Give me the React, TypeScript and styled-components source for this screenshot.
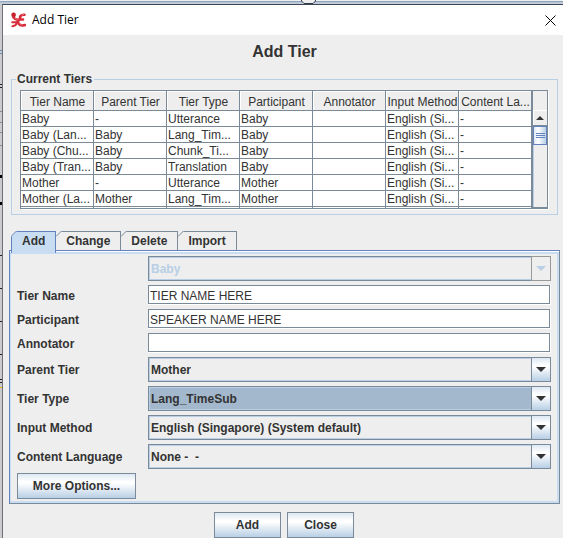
import React from "react";
import styled, { createGlobalStyle, css } from "styled-components";

const ink = "#333333";
const steel = "#7a8a99";
const sky = "#b8cfe5";
const paleBlue = "#c8ddf2";
const face = "#eeeeee";
const blue = "#6382bf";
const metal = "linear-gradient(#dde8f3 0%, #ffffff 32%, #ffffff 38%, #b8cfe5 100%)";

const Global = createGlobalStyle`
  * { box-sizing: border-box; }
  body {
    margin: 0;
    background: #cbcbcd;
    color: ${ink};
    font: 12px/16px "Liberation Sans", Arial, sans-serif;
    overflow: hidden;
  }
  button, input, select { font: inherit; color: inherit; margin: 0; border-radius: 0; }
`;

const Desktop = styled.div`
  display: grid;
  grid-template-columns: 2px minmax(0, 1fr);
  grid-template-rows: 4px minmax(534px, auto);
  min-height: 100vh;
`;

const SliderTrack = styled.div`
  grid-column: 1 / -1;
  display: flex;
  justify-content: center;
  padding-left: 54px;
  background: linear-gradient(#eeeeee 0 1px, #8fa6c0 1px 2px, #b5c5d8 2px 3px, #c8ccd2 3px);
`;

const Backdrop = styled.svg`
  display: block;
  width: 2px;
  height: 534px;
`;

const Dialog = styled.main`
  background: ${face};
  border-top: 1px solid #3b4658;
  border-left: 1px solid #6d7177;
`;

const TitleBar = styled.header`
  display: flex;
  align-items: center;
  height: 30px;
  padding: 0 7px 0 8px;
  background: #ffffff;
  color: #000000;
  font-family: "Open Sans", "Noto Sans", sans-serif;
`;

const TitleText = styled.span`
  flex: 1;
  padding-left: 6px;
`;

const CloseButton = styled.button`
  display: grid;
  padding: 0;
  border: 0;
  background: none;
`;

const Content = styled.div`
  display: flex;
  flex-direction: column;
  padding: 7px 3px 0 6px;
`;

const Heading = styled.h1`
  margin: 0;
  text-align: center;
  font-size: 16px;
  line-height: 20px;
`;

const Group = styled.fieldset`
  min-width: 0;
  margin: 9px 2px 0;
  padding: 3px 9px 5px 8px;
  border: 1px solid ${sky};
`;

const GroupTitle = styled.legend`
  margin-left: -4px;
  padding: 0 2px 0 1px;
  font-weight: bold;
`;

const ScrollPane = styled.div`
  display: grid;
  grid-template-columns: minmax(0, 1fr) 15px;
  height: 119px;
  overflow: hidden;
  border: 1px solid ${steel};
  box-shadow: 1px 1px 0 #ffffff;
`;

const TierTable = styled.table`
  width: 100%;
  table-layout: fixed;
  border-collapse: separate;
  border-spacing: 0;
  background: #ffffff;
`;

const cell = css`
  overflow: hidden;
  white-space: nowrap;
  font-weight: normal;
  line-height: 13px;
  border-right: 1px solid ${steel};
  border-bottom: 1px solid ${steel};
`;

const HeadCell = styled.th`
  ${cell}
  height: 20px;
  padding: 4px 0 0 1px;
  background: ${face};
  box-shadow: inset 1px 1px 0 #ffffff;
`;

const Cell = styled.td`
  ${cell}
  height: 16px;
  padding: 2px 0 0 1px;
`;

const Rail = styled.div`
  display: flex;
  flex-direction: column;
  padding-top: 19px;
  border-left: 1px solid ${steel};
`;

const RailButton = styled.button`
  display: grid;
  place-items: center;
  height: 16px;
  padding: 0;
  border: 1px solid ${steel};
  border-width: 0 0 1px;
  background: ${face};
  box-shadow: inset 1px 1px 0 #ffffff;
  &:last-child { border-width: 1px 0 0; }
`;

const Thumb = styled.div`
  display: grid;
  place-items: center;
  height: 19px;
  border: 1px solid ${blue};
  background: linear-gradient(90deg, #dde8f3, #ffffff 35%, #b8cfe5);
`;

const Track = styled.div`
  flex: 1;
  border-left: 1px solid ${sky};
`;

const Tabs = styled.div`
  display: flex;
  margin: 16px 2px 0;
`;

const Tab = styled.button<{ $active?: boolean }>`
  position: relative;
  height: 19px;
  padding: 0 10px;
  border: 1px solid ${steel};
  border-width: 1px 1px 0 0;
  background: ${face};
  font-weight: bold;
  line-height: 16px;
  ${(p) =>
    p.$active &&
    css`
      z-index: 1;
      height: 22px;
      margin-bottom: -3px;
      padding-bottom: 3px;
      border-color: ${blue};
      border-left-width: 1px;
      background: ${paleBlue};
    `}
`;

const Corner = styled.svg<{ $active?: boolean }>`
  position: absolute;
  top: -1px;
  left: ${(p) => (p.$active ? "-1px" : "0")};
`;

const Panel = styled.section`
  padding: 2px 6px 2px 5px;
  border: 1px solid ${steel};
  border-top-color: ${blue};
  border-left-color: ${blue};
  box-shadow: inset 0 1px 0 #ffffff, inset 1px 3px 0 ${paleBlue}, inset -2px -2px 0 ${paleBlue};
`;

const Fields = styled.div`
  display: grid;
  grid-template-columns: 127px minmax(0, 1fr);
  align-items: center;
  gap: 4px;
  padding: 3px 2px 4px;
`;

const Label = styled.label<{ $text?: boolean }>`
  padding-top: ${(p) => (p.$text ? "2px" : "0")};
  font-weight: bold;
`;

const TextInput = styled.input`
  width: 100%;
  height: 20px;
  padding: 2px 1px 0;
  border: 1px solid ${steel};
  border-bottom-width: 1px;
  background: #ffffff;
  outline: 0;
`;

const InputFrame = styled.div`
  display: grid;
  height: 20px;
  padding: 0 1px 1px 0;
  background: #ffffff;

  ${TextInput} { height: 19px; }
`;

const Combo = styled.div`
  display: grid;
  grid-template-columns: minmax(0, 1fr) 20px;
  height: 25px;
`;

const Select = styled.select<{ $focused?: boolean }>`
  grid-area: 1 / 1 / 2 / 3;
  appearance: none;
  width: 100%;
  padding: 0 22px 0 2px;
  border: 1px solid ${steel};
  background: ${(p) => (p.$focused ? "#a3b8cc" : face)};
  box-shadow: inset 0 0 0 1px ${sky};
  font-weight: bold;
  outline: 0;
  &:disabled { color: ${sky}; opacity: 1; }
`;

const ArrowBox = styled.span<{ $off?: boolean }>`
  grid-area: 1 / 2;
  z-index: 1;
  display: grid;
  place-items: center;
  pointer-events: none;
  color: ${(p) => (p.$off ? sky : ink)};
  border: 1px solid ${(p) => (p.$off ? "#999999" : steel)};
  background: ${(p) => (p.$off ? face : metal)};
`;

const Button = styled.button<{ $wide?: boolean }>`
  width: ${(p) => (p.$wide ? "119px" : "67px")};
  height: 26px;
  padding: 0;
  border: 1px solid ${steel};
  background: ${metal};
  font-weight: bold;
`;

const PanelActions = styled.div`
  display: flex;
  padding: 0 2px 2px;
`;

const Footer = styled.footer`
  display: flex;
  justify-content: center;
  gap: 6px;
  padding: 8px 1px 0 0;
`;

const headers = ["Tier Name", "Parent Tier", "Tier Type", "Participant", "Annotator", "Input Method", "Content La..."];

const tiers = [
  ["Baby", "-", "Utterance", "Baby"],
  ["Baby (Lan...", "Baby", "Lang_Tim...", "Baby"],
  ["Baby (Chu...", "Baby", "Chunk_Ti...", "Baby"],
  ["Baby (Tran...", "Baby", "Translation", "Baby"],
  ["Mother", "-", "Utterance", "Mother"],
  ["Mother (La...", "Mother", "Lang_Tim...", "Mother"],
  ["", "", "", ""],
];

function Triangle({ up, small }: { up?: boolean; small?: boolean }) {
  const w = small ? 8 : 10;
  const h = small ? 4 : 5;
  return (
    <svg width={w} height={h} aria-hidden="true">
      <path d={up ? `M0 ${h}L${w / 2} 0L${w} ${h}Z` : `M0 0H${w}L${w / 2} ${h}Z`} fill="currentColor" />
    </svg>
  );
}

function Logo() {
  return (
    <svg width="15" height="16" viewBox="0 0 15 16" aria-hidden="true">
      <circle cx="2.6" cy="2.9" r="2.3" fill="#c4202c" />
      <path d="M2.5 5.500Q5 8.500 8 7.500Q9.500 6.500 9.200 4.500Q10 2.600 13.500 2.800" fill="none" stroke="#d42a38" strokeWidth="2.600" strokeLinecap="round" />
      <path d="M8 7.500H12M8 7.500Q6.500 9 7.500 11.500Q9.500 14.500 14 13" fill="none" stroke="#d92e3c" strokeWidth="2.600" strokeLinecap="round" />
      <path d="M1.200 10.300H5Q6.500 10 7.500 8.500M5.800 11Q5 13.800 1.500 14.300" fill="none" stroke="#d92e3c" strokeWidth="2" strokeLinecap="round" />
      <path d="M4 6.400Q6 7.800 8 6.800M10.500 3L13 2.500M8.500 11.500L11 13" fill="none" stroke="#f2717a" strokeWidth="0.900" />
    </svg>
  );
}

function ComboBox({ id, label, value, focused, disabled }: { id: string; label?: string; value: string; focused?: boolean; disabled?: boolean }) {
  return (
    <>
      {label ? <Label htmlFor={id}>{label}</Label> : <span />}
      <Combo>
        <Select id={id} aria-label={label ?? "Tier"} $focused={focused} disabled={disabled}>
          <option>{value}</option>
        </Select>
        <ArrowBox $off={disabled}>
          <Triangle />
        </ArrowBox>
      </Combo>
    </>
  );
}

function Field({ id, label, value }: { id: string; label: string; value: string }) {
  return (
    <>
      <Label $text htmlFor={id}>{label}</Label>
      <InputFrame>
        <TextInput id={id} defaultValue={value} />
      </InputFrame>
    </>
  );
}

function TabButton({ name, active }: { name: string; active?: boolean }) {
  return (
    <Tab role="tab" aria-selected={!!active} $active={active}>
      <Corner $active={active} width="6" height="6" aria-hidden="true">
        <path d="M0 0H6L0 6Z" fill={face} />
        <path d="M0 5.500L5.500 0" stroke={active ? blue : steel} />
      </Corner>
      {name}
    </Tab>
  );
}

export default function App() {
  return (
    <>
      <Global />
      <Desktop>
        <SliderTrack>
          <svg width="15" height="4" aria-hidden="true">
            <path d="M.5 0V1L3 3.500H12L14.500 1V0" fill="#eeeeee" stroke="#333b48" />
          </svg>
        </SliderTrack>
        <Backdrop aria-hidden="true">
          <path d="M0 46.500H2M0 49.500H2" stroke="#7a8a99" />
          <path d="M0 48H2" stroke="#b8cfe5" strokeWidth="2" />
          <path d="M0 80.500H2M0 83.500H2M0 251.500H2M0 284.500H2M0 317.500H2M0 350.500H2M0 375.500H2M0 378.500H2" stroke="#222222" />
          <path d="M0 107.500H2M0 118.500H2M0 128.500H2M0 141.500H2" stroke="#8a8a8c" />
          <path d="M0 172.500H2M0 199.500H2" stroke="#000000" strokeWidth="3" />
          <path d="M0 383.500H2" stroke="#f2b200" />
        </Backdrop>
        <Dialog>
          <TitleBar>
            <Logo />
            <TitleText>Add Tier</TitleText>
            <CloseButton aria-label="Close window">
              <svg width="11" height="11" aria-hidden="true">
                <path d="M.5 .5L10.500 10.500M10.500 .5L.5 10.500" stroke="#000000" />
              </svg>
            </CloseButton>
          </TitleBar>
          <Content>
            <Heading>Add Tier</Heading>
            <Group>
              <GroupTitle>Current Tiers</GroupTitle>
              <ScrollPane>
                <TierTable>
                  <thead>
                    <tr>
                      {headers.map((h) => (
                        <HeadCell key={h} scope="col">{h}</HeadCell>
                      ))}
                    </tr>
                  </thead>
                  <tbody>
                    {tiers.map((t, i) => (
                      <tr key={i}>
                        {t.map((v, j) => (
                          <Cell key={j}>{v}</Cell>
                        ))}
                        <Cell />
                        <Cell>{t[0] && "English (Si..."}</Cell>
                        <Cell>{t[0] && "-"}</Cell>
                      </tr>
                    ))}
                  </tbody>
                </TierTable>
                <Rail>
                  <RailButton aria-label="Scroll up">
                    <Triangle up small />
                  </RailButton>
                  <Thumb>
                    <svg width="9" height="7" aria-hidden="true">
                      <path d="M0 1.500H9M0 3.500H9M0 5.500H9" stroke={blue} />
                    </svg>
                  </Thumb>
                  <Track />
                  <RailButton aria-label="Scroll down">
                    <Triangle small />
                  </RailButton>
                </Rail>
              </ScrollPane>
            </Group>
            <Tabs role="tablist">
              <TabButton name="Add" active />
              <TabButton name="Change" />
              <TabButton name="Delete" />
              <TabButton name="Import" />
            </Tabs>
            <Panel role="tabpanel" aria-label="Add">
              <Fields>
                <ComboBox id="tier" value="Baby" disabled />
                <Field id="name" label="Tier Name" value="TIER NAME HERE" />
                <Field id="participant" label="Participant" value="SPEAKER NAME HERE" />
                <Field id="annotator" label="Annotator" value="" />
                <ComboBox id="parent" label="Parent Tier" value="Mother" />
                <ComboBox id="type" label="Tier Type" value="Lang_TimeSub" focused />
                <ComboBox id="input" label="Input Method" value="English (Singapore) (System default)" />
                <ComboBox id="language" label="Content Language" value={"None -\u00a0 -"} />
              </Fields>
              <PanelActions>
                <Button $wide>More Options...</Button>
              </PanelActions>
            </Panel>
            <Footer>
              <Button>Add</Button>
              <Button>Close</Button>
            </Footer>
          </Content>
        </Dialog>
      </Desktop>
    </>
  );
}
